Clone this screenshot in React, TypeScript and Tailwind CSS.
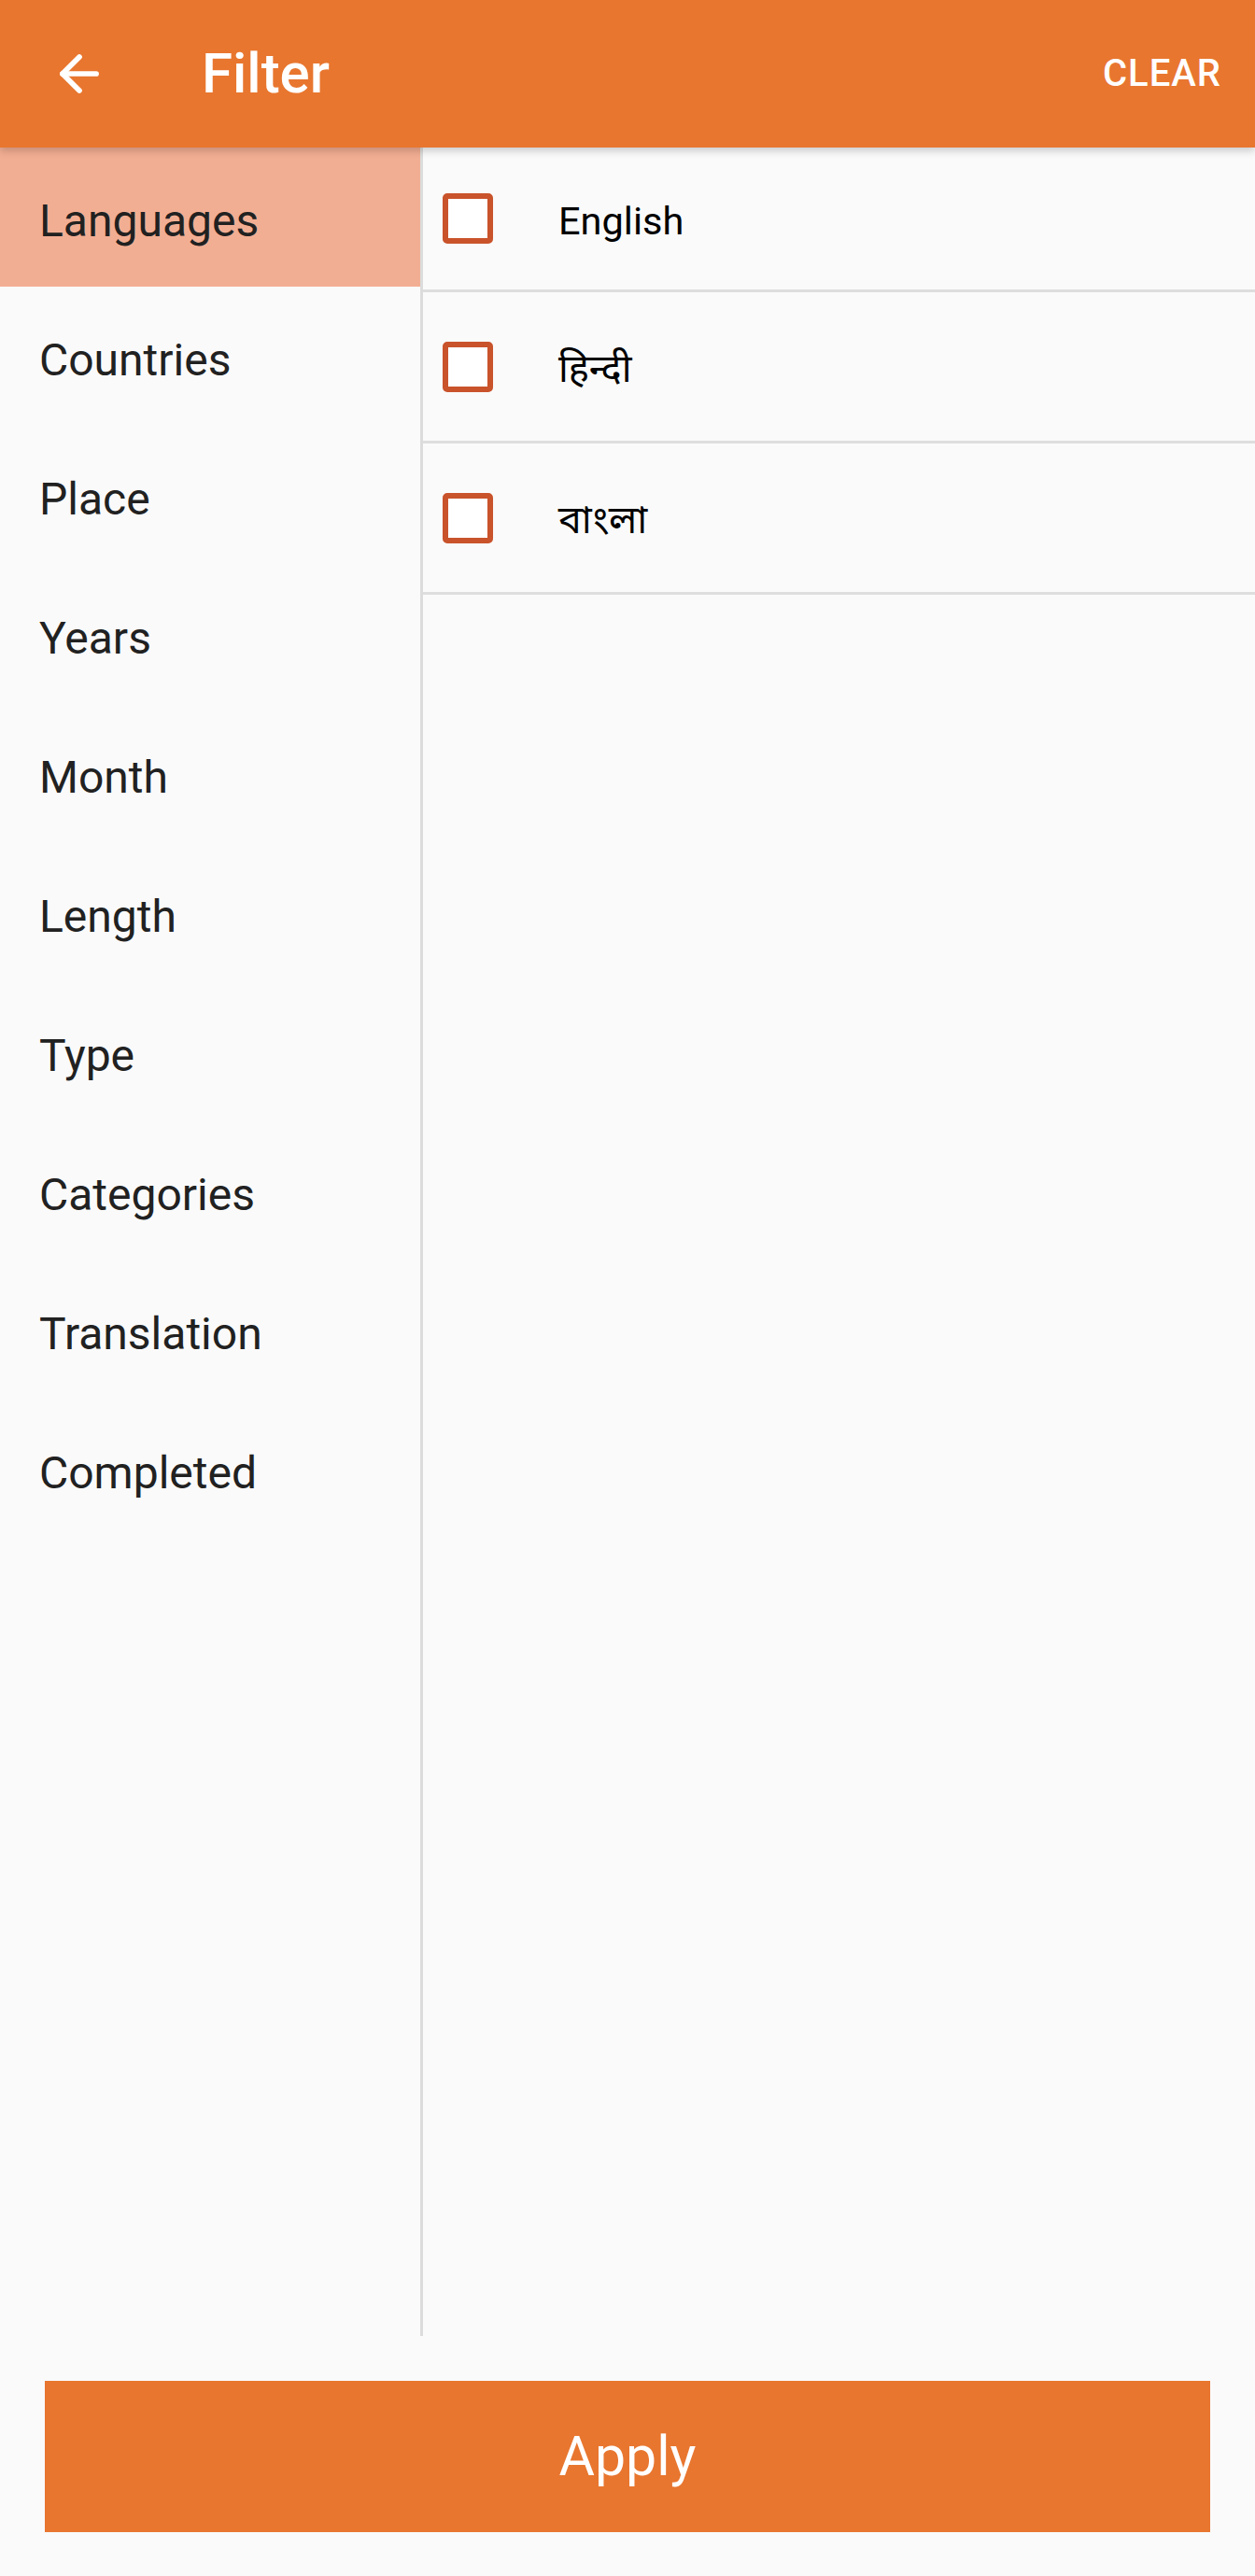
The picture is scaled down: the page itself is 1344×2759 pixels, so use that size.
import { ArrowLeft } from 'lucide-react';

const categories = [
  'Languages',
  'Countries',
  'Place',
  'Years',
  'Month',
  'Length',
  'Type',
  'Categories',
  'Translation',
  'Completed',
];

const languages = ['English', 'हिन्दी', 'বাংলা'];

export default function App() {
  const active = 'Languages';

  return (
    <div className="h-[2759px] w-[1344px] flex flex-col bg-[#fafafa] font-['Roboto','Noto_Sans',sans-serif] overflow-hidden">
      {/* Toolbar */}
      <header className="relative z-10 h-[158px] shrink-0 flex items-center bg-[#e8762f] shadow-[0_4px_8px_rgba(0,0,0,0.18)]">
        <button aria-label="Back" className="ml-[50px] w-[70px] h-[70px] flex items-center justify-center text-white">
          <ArrowLeft size={62} strokeWidth={2.2} />
        </button>
        <h1 className="ml-[96px] text-[60px] font-medium text-white leading-none">Filter</h1>
        <button className="ml-auto mr-[36px] text-[40px] font-medium tracking-[1px] text-white leading-none">
          CLEAR
        </button>
      </header>

      {/* Body */}
      <div className="flex-1 flex min-h-0">
        <nav className="w-[450px] shrink-0 flex flex-col">
          {categories.map((label) => (
            <div
              key={label}
              className={`h-[149px] shrink-0 flex items-center pl-[42px] pt-[8px] text-[48px] text-[#212121] ${
                label === active ? 'bg-[#f2ae93]' : ''
              }`}
            >
              {label}
            </div>
          ))}
        </nav>

        <div className="w-[3px] shrink-0 bg-[#dcdcdc]" />

        <div className="flex-1 flex flex-col">
          {languages.map((lang, i) => (
            <label
              key={lang}
              className={`${i === 0 ? 'h-[155px]' : 'h-[162px]'} shrink-0 flex items-center border-b-[3px] border-[#dedede]`}
            >
              <span className="ml-[21px] w-[54px] h-[54px] rounded-[5px] border-[6px] border-[#c9532b] bg-white" />
              <span className="ml-[70px] pt-[6px] text-[41.5px] text-black font-['Roboto','Noto_Sans','Noto_Sans_Devanagari','Noto_Sans_Bengali','Lohit_Devanagari','Lohit_Bengali',sans-serif]">
                {lang}
              </span>
            </label>
          ))}
        </div>
      </div>

      {/* Footer */}
      <div className="shrink-0 px-[48px] pt-[48px] pb-[47px]">
        <button className="w-full h-[162px] bg-[#e8762f] text-white text-[59px] flex items-center justify-center">
          Apply
        </button>
      </div>
    </div>
  );
}
